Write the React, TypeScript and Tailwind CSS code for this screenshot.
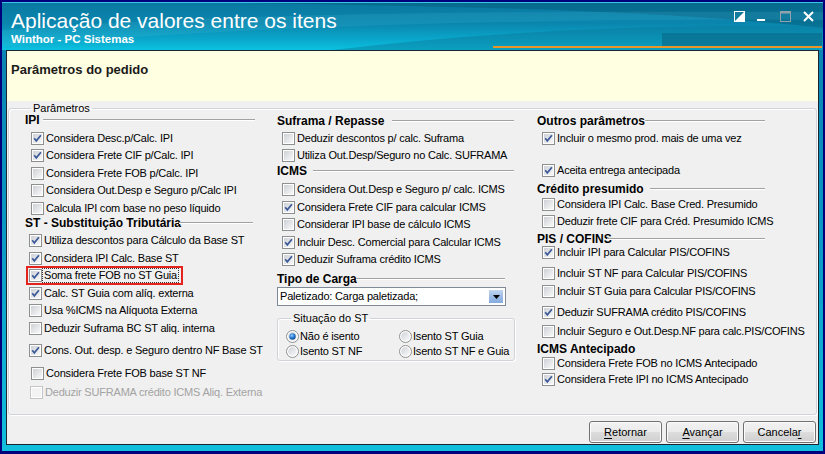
import React from "react";

type Head = { kind: "h"; text: string; mt: string; tw?: string; lw?: string };
type Box = { kind: "c"; text: string; mt: string; ml: string; on?: boolean; off?: boolean; hl?: boolean };
type Item = Head | Box;

const left: Item[] = [
  { kind: "h", text: "IPI", mt: "mt-0", tw: "w-[18px]", lw: "w-[212px]" },
  { kind: "c", text: "Considera Desc.p/Calc. IPI", on: true, mt: "mt-[3.5px]", ml: "ml-[6px]" },
  { kind: "c", text: "Considera Frete CIF p/Calc. IPI", on: true, mt: "mt-0", ml: "ml-[6px]" },
  { kind: "c", text: "Considera Frete FOB p/Calc. IPI", mt: "mt-0", ml: "ml-[6px]" },
  { kind: "c", text: "Considera Out.Desp e Seguro p/Calc IPI", mt: "mt-0", ml: "ml-[6px]" },
  { kind: "c", text: "Calcula IPI com base no peso líquido", mt: "mt-0", ml: "ml-[6px]" },
  { kind: "h", text: "ST - Substituição Tributária", mt: "mt-0", tw: "w-[154px]", lw: "w-[74px]" },
  { kind: "c", text: "Utiliza descontos para Cálculo da Base ST", on: true, mt: "mt-[3px]", ml: "ml-[4px]" },
  { kind: "c", text: "Considera IPI Calc. Base ST", on: true, mt: "mt-0", ml: "ml-[4px]" },
  { kind: "c", text: "Soma frete FOB no ST Guia", on: true, hl: true, mt: "mt-0", ml: "ml-[4px]" },
  { kind: "c", text: "Calc. ST Guia com alíq. externa", on: true, mt: "mt-0", ml: "ml-[4px]" },
  { kind: "c", text: "Usa %ICMS na Alíquota Externa", mt: "mt-0", ml: "ml-[4px]" },
  { kind: "c", text: "Deduzir Suframa BC ST aliq. interna", mt: "mt-0", ml: "ml-[4px]" },
  { kind: "c", text: "Cons. Out. desp. e Seguro dentro NF Base ST", on: true, mt: "mt-[5px]", ml: "ml-[4px]" },
  { kind: "c", text: "Considera Frete FOB base ST NF", mt: "mt-[5px]", ml: "ml-[6px]" },
  { kind: "c", text: "Deduzir SUFRAMA crédito ICMS Aliq. Externa", off: true, mt: "mt-[2px]", ml: "ml-[5px]" },
];

const middle: Item[] = [
  { kind: "h", text: "Suframa / Repasse", mt: "mt-[1px]", tw: "w-[115px]", lw: "w-[122px]" },
  { kind: "c", text: "Deduzir descontos p/ calc. Suframa", mt: "mt-[2.5px]", ml: "ml-[5px]" },
  { kind: "c", text: "Utiliza Out.Desp/Seguro no Calc. SUFRAMA", mt: "mt-0", ml: "ml-[5px]" },
  { kind: "h", text: "ICMS", mt: "mt-0", tw: "w-[36px]", lw: "w-[201px]" },
  { kind: "c", text: "Considera Out.Desp e Seguro p/ calc. ICMS", mt: "mt-[4.5px]", ml: "ml-[5px]" },
  { kind: "c", text: "Considera Frete CIF para calcular ICMS", on: true, mt: "mt-0", ml: "ml-[5px]" },
  { kind: "c", text: "Considerar IPI base de cálculo ICMS", mt: "mt-0", ml: "ml-[5px]" },
  { kind: "c", text: "Incluir Desc. Comercial  para Calcular ICMS", on: true, mt: "mt-0", ml: "ml-[5px]" },
  { kind: "c", text: "Deduzir Suframa crédito ICMS", on: true, mt: "mt-0", ml: "ml-[5px]" },
  { kind: "h", text: "Tipo de Carga", mt: "mt-[4.5px]", tw: "w-[79px]", lw: "w-[149px]" },
];

const right: Item[] = [
  { kind: "h", text: "Outros parâmetros", mt: "mt-[1px]", tw: "w-[108px]", lw: "w-[120px]" },
  { kind: "c", text: "Incluir o mesmo prod. mais de uma vez", on: true, mt: "mt-[2.5px]", ml: "ml-[5px]" },
  { kind: "c", text: "Aceita entrega antecipada", on: true, mt: "mt-[15px]", ml: "ml-[5px]" },
  { kind: "h", text: "Crédito presumido", mt: "mt-[3px]", tw: "w-[113px]", lw: "w-[115px]" },
  { kind: "c", text: "Considera IPI Calc. Base Cred. Presumido", mt: "mt-[1px]", ml: "ml-[5px]" },
  { kind: "c", text: "Deduzir frete CIF para Créd. Presumido ICMS", mt: "mt-0", ml: "ml-[5px]" },
  { kind: "h", text: "PIS / COFINS", mt: "mt-[2.5px]", tw: "w-[70px]", lw: "w-[158px]" },
  { kind: "c", text: "Incluir IPI para Calcular PIS/COFINS", on: true, mt: "-mt-[1px]", ml: "ml-[5px]" },
  { kind: "c", text: "Incluir ST NF para Calcular PIS/COFINS", mt: "mt-[3.5px]", ml: "ml-[5px]" },
  { kind: "c", text: "Incluir ST Guia para Calcular PIS/COFINS", mt: "mt-[0.5px]", ml: "ml-[5px]" },
  { kind: "c", text: "Deduzir SUFRAMA crédito PIS/COFINS", on: true, mt: "mt-[3px]", ml: "ml-[5px]" },
  { kind: "c", text: "Incluir Seguro e Out.Desp.NF para calc.PIS/COFINS", mt: "mt-[2px]", ml: "ml-[5px]" },
  { kind: "h", text: "ICMS Antecipado", mt: "mt-[2px]" },
  { kind: "c", text: "Considera Frete FOB no ICMS Antecipado", mt: "mt-[0.5px]", ml: "ml-[5px]" },
  { kind: "c", text: "Considera Frete IPI no ICMS Antecipado", on: true, mt: "-mt-[1.5px]", ml: "ml-[5px]" },
];

function Check({ on, off }: { on?: boolean; off?: boolean }) {
  return (
    <svg width="13" height="13" viewBox="0 0 13 13" className="shrink-0">
      <defs>
        <linearGradient id="cbg" x1="0" y1="0" x2="1" y2="1">
          <stop offset="0" stopColor="#cdd1d6" />
          <stop offset="1" stopColor="#f8f8f8" />
        </linearGradient>
      </defs>
      <rect x="0.5" y="0.5" width="12" height="12" fill="#fff" stroke={off ? "#c5c5c5" : "#8e8f8f"} />
      <rect x="2" y="2" width="9" height="9" fill={off ? "#f3f3f3" : "url(#cbg)"} />
      {on && <path d="M3.2 6.3 L5.3 8.8 L9.9 3.2" fill="none" stroke="#3b5998" strokeWidth="1.7" />}
    </svg>
  );
}

function Radio({ on }: { on?: boolean }) {
  return (
    <svg width="13" height="13" viewBox="0 0 13 13" className="shrink-0">
      <defs>
        <linearGradient id="rbg" x1="0" y1="0" x2="1" y2="1">
          <stop offset="0" stopColor="#cfd3d8" />
          <stop offset="1" stopColor="#fafafa" />
        </linearGradient>
        <radialGradient id="rdot" cx="0.4" cy="0.35" r="0.7">
          <stop offset="0" stopColor="#9cd2ff" />
          <stop offset="0.5" stopColor="#2b7bd0" />
          <stop offset="1" stopColor="#0f4a8c" />
        </radialGradient>
      </defs>
      <circle cx="6.5" cy="6.5" r="6" fill="#fff" stroke="#8e8f8f" />
      <circle cx="6.5" cy="6.5" r="4.4" fill="url(#rbg)" />
      {on && <circle cx="6.5" cy="6.5" r="3.2" fill="url(#rdot)" />}
    </svg>
  );
}

function Heading({ item }: { item: Head }) {
  return (
    <div className={`flex h-[12px] items-center ${item.mt}`}>
      <span className={`shrink-0 whitespace-nowrap text-[12px] font-bold leading-[12px] text-black ${item.tw ?? ""}`}>
        {item.text}
      </span>
      {item.lw && <div className={`h-[2px] border-t border-[#a2a2a2] border-b border-b-white ${item.lw}`} />}
    </div>
  );
}

function CheckRow({ item }: { item: Box }) {
  return (
    <div className={`relative flex h-[17.5px] items-center gap-[2px] ${item.mt} ${item.ml}`}>
      <Check on={item.on} off={item.off} />
      <span
        className={`whitespace-nowrap text-[11px] leading-[13px] tracking-[-0.2px] ${item.off ? "text-[#a3a3a3]" : "text-black"} ${
          item.hl ? "outline outline-1 outline-dotted outline-[#333] px-[1px] -ml-[1px]" : ""
        }`}
      >
        {item.text}
      </span>
      {item.hl && (
        <div className="absolute -left-[3px] -top-[1px] h-[19px] w-[157px] border-2 border-[#e4231d]" />
      )}
    </div>
  );
}

function Column({ items, className, children }: { items: Item[]; className: string; children?: React.ReactNode }) {
  return (
    <div className={`flex flex-col ${className}`}>
      {items.map((it) =>
        it.kind === "h" ? <Heading key={it.text} item={it} /> : <CheckRow key={it.text} item={it} />
      )}
      {children}
    </div>
  );
}

function Btn({ pre, u, post }: { pre: string; u: string; post: string }) {
  return (
    <button className="h-[22px] w-[73px] rounded-[3px] border border-[#707070] bg-[linear-gradient(180deg,#f2f2f2_0%,#ebebeb_48%,#dddddd_52%,#cfcfcf_100%)] text-[11px] leading-[13px] text-black shadow-[inset_0_0_0_1px_#fcfcfc]">
      {pre}
      <span className="underline underline-offset-[2px]">{u}</span>
      {post}
    </button>
  );
}

function TitleBar() {
  return (
    <div className="relative flex h-[48px] justify-between overflow-hidden bg-[linear-gradient(180deg,#0a78a0_0%,#0a86ae_45%,#0aa9cd_80%,#0bc2e0_100%)]">
      <svg className="absolute inset-0 h-full w-full" viewBox="0 0 821 48" preserveAspectRatio="none">
        <path d="M180 0 C 420 4, 640 6, 821 26 L821 0 Z" fill="#06607f" opacity="0.55" />
        <path d="M0 28 C 180 14, 420 8, 821 10 L821 18 C 520 16, 260 24, 0 44 Z" fill="#6fd8ee" opacity="0.12" />
        <path d="M330 48 C 480 30, 640 22, 821 24 L821 48 Z" fill="#0a7899" opacity="0.45" />
        <rect x="660" y="31" width="160" height="13" fill="#086d8d" opacity="0.7" />
        <line x1="0" y1="0.5" x2="821" y2="0.5" stroke="#3cc4e4" strokeWidth="1" />
      </svg>
      <div className="relative pl-[9px] pt-[7px] text-white">
        <div className="text-[21px] leading-[24px]">Aplicação de valores entre os itens</div>
        <div className="text-[11.5px] font-bold leading-[13px]">Winthor - PC Sistemas</div>
      </div>
      <div className="relative flex gap-[12px] pr-[9px] pt-[9px]">
        <svg width="11" height="11" viewBox="0 0 11 11">
          <rect x="0.5" y="0.5" width="10" height="10" fill="none" stroke="#fff" />
          <path d="M10.5 0.5 L10.5 10.5 L0.5 10.5 Z" fill="#fff" />
        </svg>
        <svg width="11" height="11" viewBox="0 0 11 11">
          <rect x="0" y="8" width="8" height="2" fill="#fff" />
        </svg>
        <svg width="11" height="11" viewBox="0 0 11 11">
          <rect x="0.5" y="0.5" width="10" height="10" fill="none" stroke="#8fa3ad" />
          <rect x="0.5" y="0.5" width="10" height="2" fill="#8fa3ad" />
        </svg>
        <svg width="11" height="11" viewBox="0 0 11 11">
          <path d="M1 1 L10 10 M10 1 L1 10" stroke="#fff" strokeWidth="2" />
        </svg>
      </div>
      <div className="absolute bottom-[2px] left-[491px] right-[1px] h-[2px] bg-[#e8962a]" />
    </div>
  );
}

const radios: [string, boolean][] = [
  ["Não é isento", true],
  ["Isento ST Guia", false],
  ["Isento ST NF", false],
  ["Isento ST NF e Guia", false],
];

export default function App() {
  return (
    <div className="h-[454px] w-[825px] bg-[#00007c] px-[2px] pb-[3px] pt-[2px] font-['Liberation_Sans',Arial,sans-serif]">
      <div className="flex h-full flex-col bg-[linear-gradient(180deg,#0b7fae_0%,#0b98c4_50%,#12bfdc_100%)]">
        <TitleBar />
        <div className="mx-[4px] mb-[6px] flex flex-1 flex-col border border-[#1a2630] bg-[#f0f0f0]">
          <div className="h-[50px] bg-[#ffffe1] pl-[4px] pt-[11px] text-[13px] font-bold leading-[15px] text-[#1a1a1a]">
            Parâmetros do pedido
          </div>
          <fieldset className="mx-[1px] mt-[2px] h-[312px] rounded-[3px] border border-[#d0d4d8] pl-[16px] shadow-[inset_1px_1px_0_#fff,1px_1px_0_#fff]">
            <legend className="ml-[6px] px-[2px] text-[11px] leading-[11px] text-black">Parâmetros</legend>
            <div className="flex">
              <Column items={left} className="w-[252px]" />
              <Column items={middle} className="w-[260px]">
                <div className="mt-[2px] flex h-[19px] w-[229px] items-center justify-between border border-[#7f8a99] bg-white pl-[2px] pr-[2px]">
                  <span className="text-[11px] leading-[13px] tracking-[-0.2px] text-black">Paletizado: Carga paletizada;</span>
                  <div className="flex h-[13px] w-[14px] items-center justify-center bg-[linear-gradient(180deg,#c3d7f0_0%,#9dbbe6_50%,#86abe0_100%)]">
                    <svg width="7" height="4" viewBox="0 0 7 4">
                      <path d="M0 0 L7 0 L3.5 4 Z" fill="#000" />
                    </svg>
                  </div>
                </div>
                <fieldset className="mt-[6.5px] h-[48.5px] w-[237px] rounded-[3px] border border-[#d0d4d8] pl-[8px] shadow-[inset_1px_1px_0_#fff,1px_1px_0_#fff]">
                  <legend className="ml-[5px] px-[2px] text-[11px] leading-[11px] text-black">Situação do ST</legend>
                  <div className="mt-[5px] grid grid-cols-[113px_115px]">
                    {radios.map(([t, on]) => (
                      <div key={t} className="flex h-[15px] items-center gap-[1px] whitespace-nowrap">
                        <Radio on={on} />
                        <span className="text-[11px] leading-[13px] tracking-[-0.2px] text-black">{t}</span>
                      </div>
                    ))}
                  </div>
                </fieldset>
              </Column>
              <Column items={right} className="flex-1" />
            </div>
          </fieldset>
          <div className="mt-[6px] flex justify-end gap-[4px] pr-[2px]">
            <Btn pre="" u="R" post="etornar" />
            <Btn pre="" u="A" post="vançar" />
            <Btn pre="Cancela" u="r" post="" />
          </div>
        </div>
      </div>
    </div>
  );
}
